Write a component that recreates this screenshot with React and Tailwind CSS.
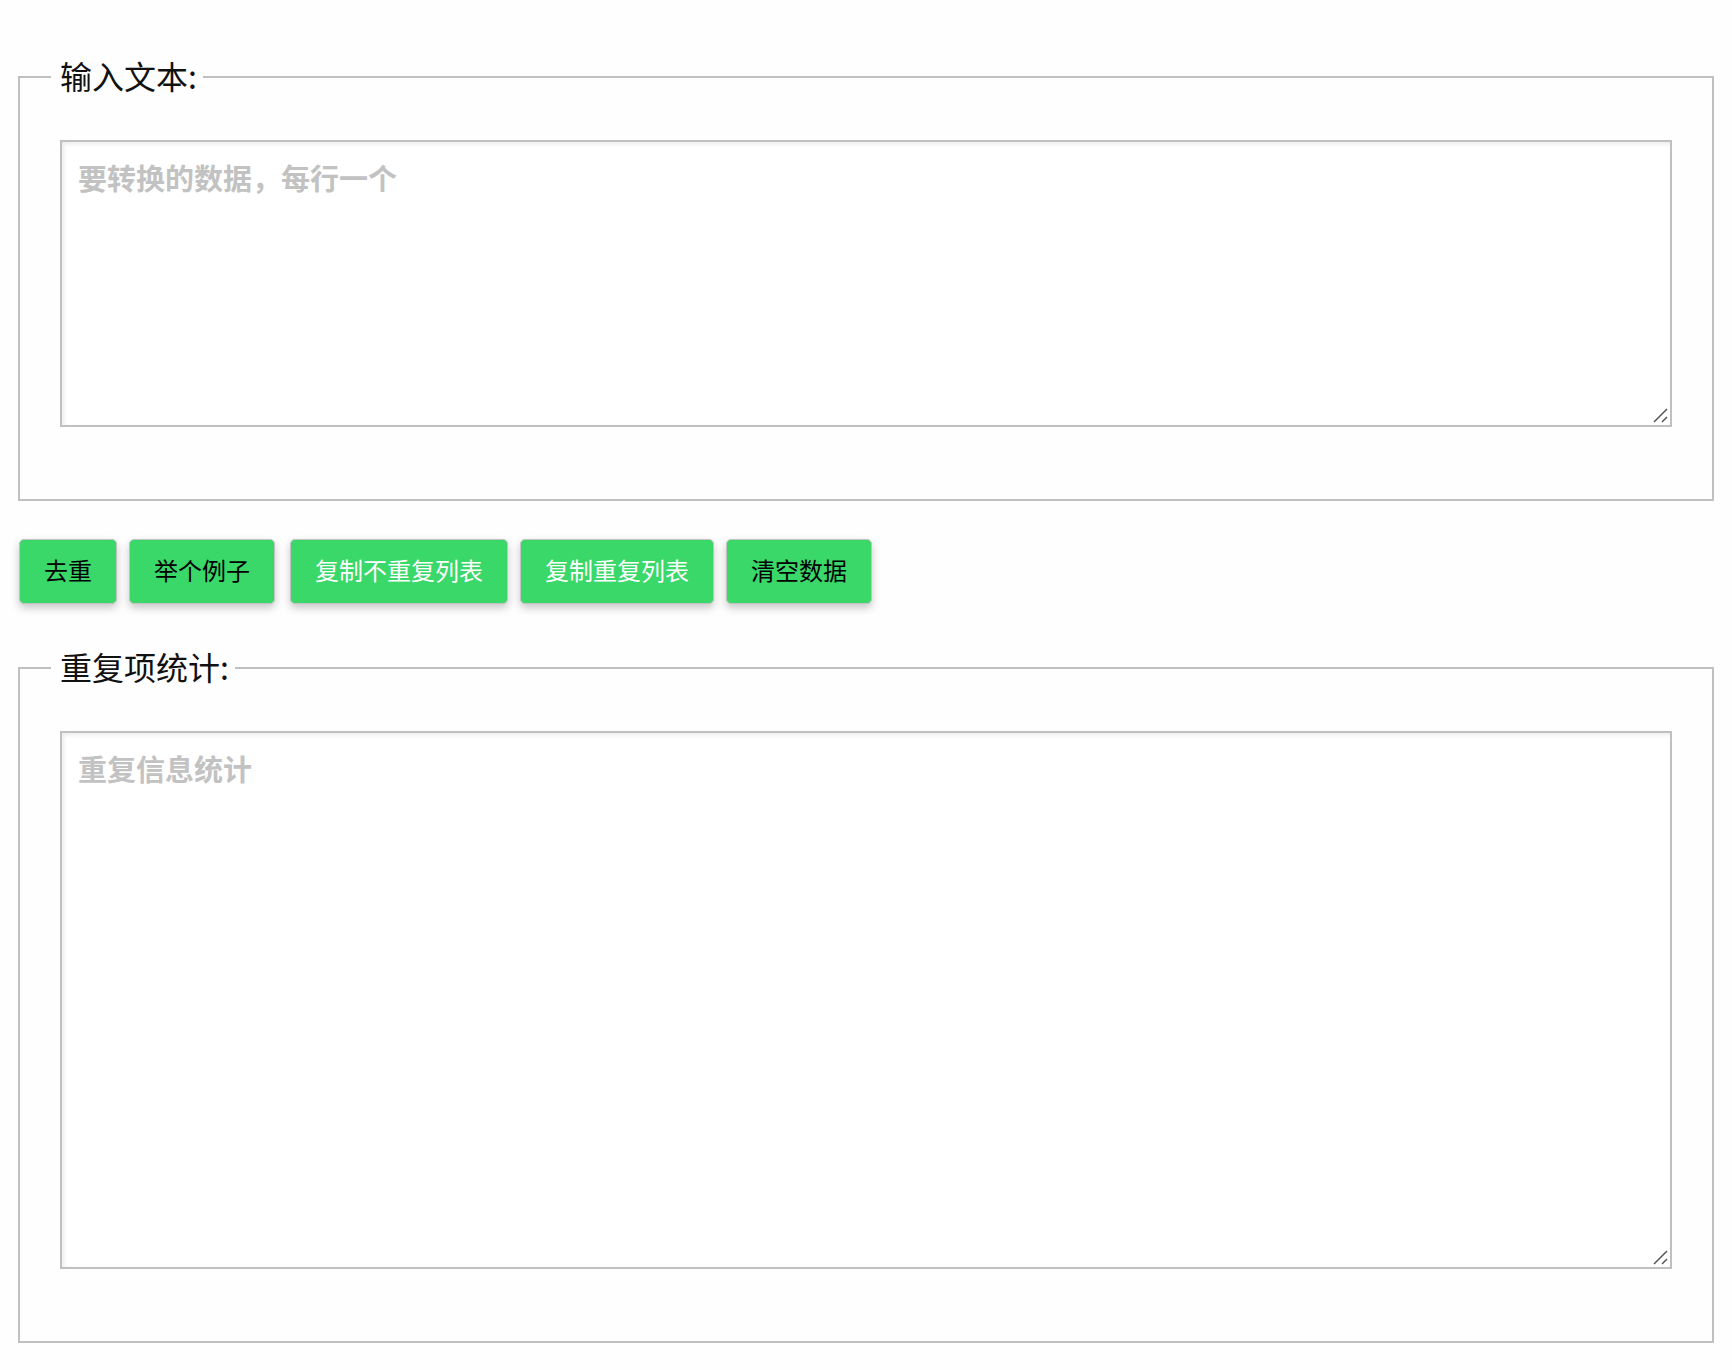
import React, { useState } from 'react';

const font = { fontFamily: '"Noto Sans CJK SC", "Noto Sans", sans-serif' };

// 右下角的拖拽手柄
const Grip = () => (
  <svg
    className="pointer-events-none absolute right-[4px] bottom-[4px]"
    width="16"
    height="16"
    viewBox="0 0 16 16"
  >
    <path d="M2 15 L15 2 M10 15 L15 10" stroke="#555" strokeWidth="1.5" fill="none" />
  </svg>
);

const Section = ({ title, placeholder, value, onChange, height }) => (
  <fieldset className="border-2 border-[#c0c0c0] px-[40px] pt-[45px] pb-[72px]">
    <legend className="-ml-[9px] pl-[9px] pr-[6px] pb-[4px] text-[32px] leading-[32px] text-[#111]">
      {title}
    </legend>
    <div className="relative">
      <textarea
        value={value}
        onChange={onChange}
        placeholder={placeholder}
        className={`block w-full ${height} resize-none border-2 border-[#c0c0c0] bg-white pt-[14px] pl-[16px] pr-[16px] text-[29px] leading-[42px] text-[#333] font-semibold placeholder:text-[#c2c2c2] shadow-[inset_2px_2px_4px_rgba(0,0,0,0.08)] outline-none`}
      />
      <Grip />
    </div>
  </fieldset>
);

export default function App() {
  const [input, setInput] = useState('');
  const [stats, setStats] = useState('');

  const buttons = [
    { label: '去重', text: 'text-black' },
    { label: '举个例子', text: 'text-black' },
    { label: '复制不重复列表', text: 'text-white', extra: 'ml-[3px]' },
    { label: '复制重复列表', text: 'text-white' },
    { label: '清空数据', text: 'text-black' },
  ];

  return (
    <div className="min-h-screen bg-[#fefefe] px-[18px] pt-[59px] pb-[20px]" style={font}>
      {/* 输入 */}
      <Section
        title="输入文本:"
        placeholder="要转换的数据，每行一个"
        value={input}
        onChange={(e) => setInput(e.target.value)}
        height="h-[287px]"
      />

      {/* 操作按钮 */}
      <div className="mt-[38px] mb-[46px] ml-[1px] flex items-center gap-[12px]">
        {buttons.map((b) => (
          <button
            key={b.label}
            onClick={() => b.label === '清空数据' && (setInput(''), setStats(''))}
            className={`h-[65px] rounded-[5px] border border-[#c2c2c2] bg-[#39d869] px-[24px] pb-[4px] text-[24px] leading-none ${b.text} ${b.extra || ''} shadow-[0_4px_8px_rgba(0,0,0,0.22)]`}
          >
            {b.label}
          </button>
        ))}
      </div>

      {/* 统计 */}
      <Section
        title="重复项统计:"
        placeholder="重复信息统计"
        value={stats}
        onChange={(e) => setStats(e.target.value)}
        height="h-[538px]"
      />
    </div>
  );
}
